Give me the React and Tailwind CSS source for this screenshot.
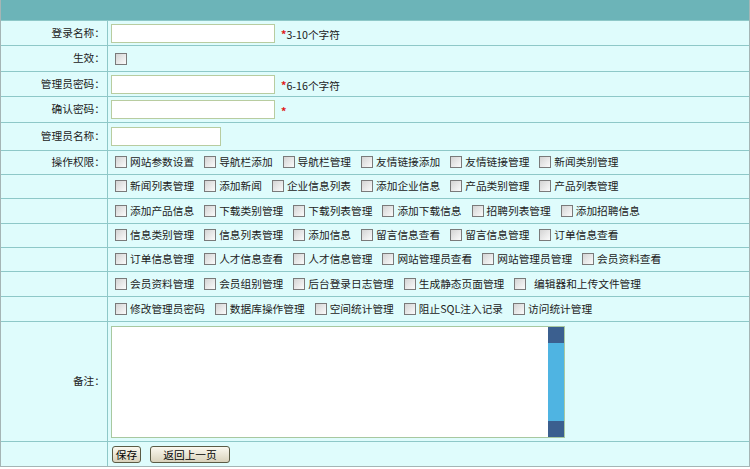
import { useState } from 'react'

const rows = [
    ["网站参数设置", "导航栏添加", "导航栏管理", "友情链接添加", "友情链接管理", "新闻类别管理"],
    ["新闻列表管理", "添加新闻", "企业信息列表", "添加企业信息", "产品类别管理", "产品列表管理"],
    ["添加产品信息", "下载类别管理", "下载列表管理", "添加下载信息", "招聘列表管理", "添加招聘信息"],
    ["信息类别管理", "信息列表管理", "添加信息", "留言信息查看", "留言信息管理", "订单信息查看"],
    ["订单信息管理", "人才信息查看", "人才信息管理", "网站管理员查看", "网站管理员管理", "会员资料查看"],
    ["会员资料管理", "会员组别管理", "后台登录日志管理", "生成静态页面管理", "  编辑器和上传文件管理"],
    ["修改管理员密码", "数据库操作管理", "空间统计管理", "阻止SQL注入记录", "访问统计管理"],
]

const heights = ["h-[24px]", "h-[24px]", "h-[25px]", "h-[24px]", "h-[24px]", "h-[25px]", "h-[25px]"]

const Box = ({ checked, onClick }) => (
    <span
        onClick={onClick}
        className="inline-block w-[12px] h-[12px] border border-[#7a7a7a] bg-gradient-to-br from-[#d4d4d4] to-[#fbfbfb] shrink-0 cursor-pointer"
    >
        {checked ? <span className="block w-full h-full text-[9px] leading-[10px] text-center">✓</span> : null}
    </span>
)

const Row = ({ label, h, children, className = "" }) => (
    <div className={`flex ${h} border-b border-[#8ec8c8]`}>
        <div className="w-[107px] shrink-0 border-r border-[#8ec8c8] flex items-center justify-end pr-[2px] text-[#222]">
            {label}
        </div>
        <div className={`flex-1 flex items-center pl-[3px] ${className}`}>{children}</div>
    </div>
)

const Hint = ({ text }) => (
    <span className="ml-[6px] mt-[5px] text-[#222]">
        <span className="text-[#e01818] font-bold">*</span>{text}
    </span>
)

const Field = ({ w }) => (
    <input type="text" className={`${w} h-[19px] bg-white border border-[#b8cca0] outline-none px-1`} />
)

const Btn = ({ children, w }) => (
    <button className={`${w} h-[17px] leading-[15px] text-[10.7px] text-black border border-[#5b5b45] rounded-[3px] bg-gradient-to-b from-[#fbf9f0] to-[#d9d2bb]`}>
        {children}
    </button>
)

const App = () => {
    const [active, setActive] = useState(false)
    const [perms, setPerms] = useState({})

    const toggle = (key) => setPerms(p => ({ ...p, [key]: !p[key] }))

    return (
        <div className="w-[750px] h-[469px] bg-white font-['Noto_Sans_CJK_SC',sans-serif] text-[10.7px]">
            <div className="border-l border-r border-[#a5b5b5] bg-[#dffcfc]">
                <div className="h-[21px] bg-[#6cb4b8] border-b border-[#8ec8c8]"></div>

                <Row label="登录名称：" h="h-[25px]">
                    <Field w="w-[164px]" />
                    <Hint text="3-10个字符" />
                </Row>
                <Row label="生效：" h="h-[26px]" className="pl-[7px]">
                    <Box checked={active} onClick={() => setActive(!active)} />
                </Row>
                <Row label="管理员密码：" h="h-[25px]">
                    <Field w="w-[164px]" />
                    <Hint text="6-16个字符" />
                </Row>
                <Row label="确认密码：" h="h-[26px]">
                    <Field w="w-[164px]" />
                    <Hint text="" />
                </Row>
                <Row label="管理员名称：" h="h-[28px]">
                    <Field w="w-[110px]" />
                </Row>

                {rows.map((items, i) => (
                    <Row key={i} label={i === 0 ? "操作权限：" : ""} h={heights[i]} className="pl-[7px]">
                        {items.map((name) => (
                            <span key={name} className="inline-flex items-center mr-[10px] text-[#222] whitespace-pre">
                                <Box checked={perms[name]} onClick={() => toggle(name)} />
                                <span className="ml-[3px]">{name}</span>
                            </span>
                        ))}
                    </Row>
                ))}

                <Row label="备注：" h="h-[120px]" className="items-start pt-[4px]">
                    <div className="flex w-[454px] h-[112px] border border-[#a8c8a0] bg-white">
                        <textarea className="flex-1 h-full resize-none outline-none overflow-hidden p-1"></textarea>
                        <div className="w-[16px] h-full flex flex-col">
                            <div className="h-[16px] bg-[#3b5f8f]"></div>
                            <div className="flex-1 bg-[#4fb4e2]"></div>
                            <div className="h-[16px] bg-[#3b5f8f]"></div>
                        </div>
                    </div>
                </Row>

                <div className="flex h-[25px] border-b border-[#a5b5b5]">
                    <div className="w-[107px] shrink-0 border-r border-[#8ec8c8]"></div>
                    <div className="flex-1 flex items-center pl-[4px] gap-[9px]">
                        <Btn w="w-[29px]">保存</Btn>
                        <Btn w="w-[80px]">返回上一页</Btn>
                    </div>
                </div>
            </div>
        </div>
    )
}

export default App
